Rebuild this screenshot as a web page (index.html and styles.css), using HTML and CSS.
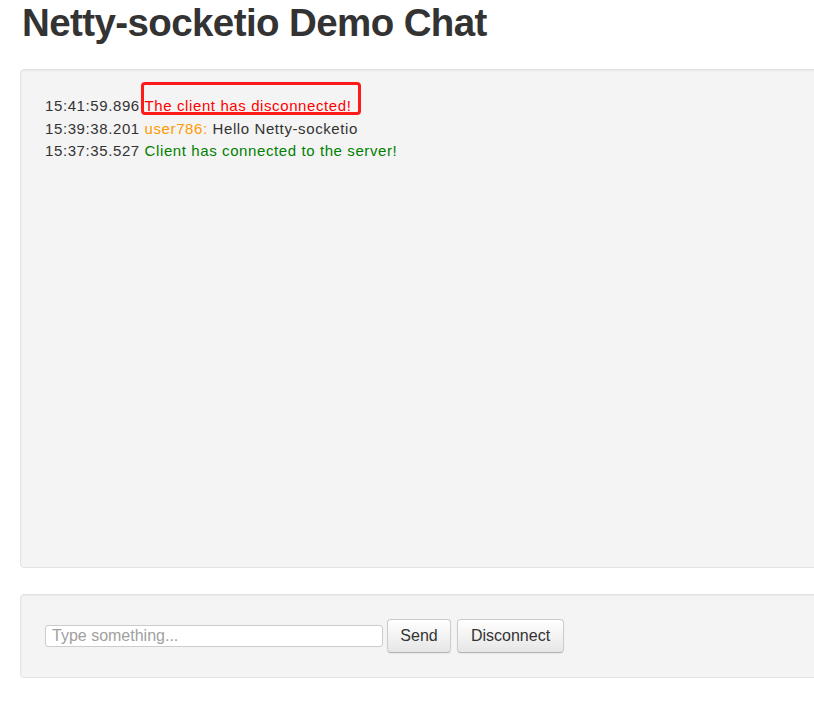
FILE: index.html
```html
<!DOCTYPE html>
<html lang="en">
<head>
<meta charset="utf-8">
<title>Netty-socketio Demo Chat</title>
<link rel="stylesheet" href="styles.css">
</head>
<body>
<div class="container">
  <h1 class="title">Netty-socketio Demo Chat</h1>
  <div class="well console">
    <div class="line"><span class="time">15:41:59.896</span> <span class="msg-error">The client has disconnected!</span></div>
    <div class="line"><span class="time">15:39:38.201</span> <span class="user">user786:</span> Hello Netty-socketio</div>
    <div class="line"><span class="time">15:37:35.527</span> <span class="msg-ok">Client has connected to the server!</span></div>
  </div>
  <form class="well controls" onsubmit="return false;">
    <input class="msg-input" type="text" placeholder="Type something...">
    <button class="btn btn-send" type="button">Send</button>
    <button class="btn btn-disconnect" type="button">Disconnect</button>
  </form>
</div>
</body>
</html>
```

FILE: styles.css
```css
html, body {
  margin: 0;
  padding: 0;
  overflow: hidden;
  background: #ffffff;
}
body {
  font-family: "Liberation Sans", Arial, Helvetica, sans-serif;
  color: #333333;
  font-size: 15px;
  line-height: 22.5px;
}
.container {
  width: 940px;
  margin-left: 20px;
}
.title {
  font-size: 38.5px;
  line-height: 40px;
  font-weight: bold;
  color: #333333;
  margin: 3px 0 26px 0;
  padding-left: 2px;
  letter-spacing: -0.6px;
}
.well {
  background: #f4f4f4;
  border: 1px solid #e3e3e3;
  border-radius: 4px;
  box-shadow: inset 0 1px 1px rgba(0, 0, 0, 0.05);
  padding: 24px;
  box-sizing: border-box;
}
.console {
  height: 499px;
  margin-bottom: 26px;
  padding-top: 25px;
  letter-spacing: 0.6px;
}
.line {
  white-space: nowrap;
}
.time {
  color: #333333;
}
.msg-error {
  color: #ff0000;
  position: relative;
}
.msg-error::before {
  content: "";
  position: absolute;
  left: -4px;
  right: -9px;
  top: -15px;
  bottom: -1px;
  border: 3px solid #ff1a1a;
  border-radius: 4px;
}
.user {
  color: #ff9900;
}
.msg-ok {
  color: #008000;
}
.controls {
  height: 84px;
  margin: 0;
  display: flex;
  align-items: center;
}
.msg-input {
  width: 338px;
  height: 22px;
  box-sizing: border-box;
  border: 1px solid #cccccc;
  border-radius: 3px;
  padding: 0 6px;
  font-family: "Liberation Sans", Arial, sans-serif;
  font-size: 16px;
  color: #333333;
  background: #ffffff;
  margin: 0;
  outline: none;
}
.msg-input::placeholder {
  color: #a0a0a0;
}
.btn {
  height: 34px;
  box-sizing: border-box;
  padding: 0 12px;
  font-family: "Liberation Sans", Arial, sans-serif;
  font-size: 16px;
  color: #333333;
  background: linear-gradient(to bottom, #ffffff, #e6e6e6);
  border: 1px solid #cccccc;
  border-bottom-color: #b3b3b3;
  border-radius: 4px;
  box-shadow: inset 0 1px 0 rgba(255, 255, 255, 0.2), 0 1px 2px rgba(0, 0, 0, 0.05);
  cursor: pointer;
}
.btn-send {
  width: 64px;
  margin-left: 4px;
}
.btn-disconnect {
  width: 107px;
  margin-left: 6px;
}
```
